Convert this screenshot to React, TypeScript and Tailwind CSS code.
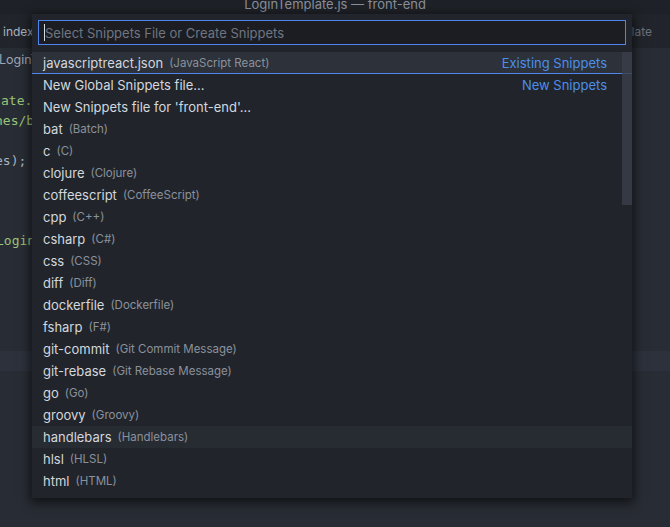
import React from "react";

const rows: { label: string; desc?: string; right?: string }[] = [
  { label: "javascriptreact.json", desc: "(JavaScript React)", right: "Existing Snippets" },
  { label: "New Global Snippets file...", right: "New Snippets" },
  { label: "New Snippets file for 'front-end'..." },
  { label: "bat", desc: "(Batch)" },
  { label: "c", desc: "(C)" },
  { label: "clojure", desc: "(Clojure)" },
  { label: "coffeescript", desc: "(CoffeeScript)" },
  { label: "cpp", desc: "(C++)" },
  { label: "csharp", desc: "(C#)" },
  { label: "css", desc: "(CSS)" },
  { label: "diff", desc: "(Diff)" },
  { label: "dockerfile", desc: "(Dockerfile)" },
  { label: "fsharp", desc: "(F#)" },
  { label: "git-commit", desc: "(Git Commit Message)" },
  { label: "git-rebase", desc: "(Git Rebase Message)" },
  { label: "go", desc: "(Go)" },
  { label: "groovy", desc: "(Groovy)" },
  { label: "handlebars", desc: "(Handlebars)" },
  { label: "hlsl", desc: "(HLSL)" },
  { label: "html", desc: "(HTML)" },
];

const codeLines: { text: string; color: string; shift: string }[] = [
  { text: "", color: "", shift: "" },
  { text: "ate.", color: "text-[#98c379]", shift: "ml-[1px]" },
  { text: "hes/b", color: "text-[#98c379]", shift: "ml-[-5px]" },
  { text: "", color: "", shift: "" },
  { text: "es);", color: "text-[#abb2bf]", shift: "ml-[-5px]" },
  { text: "", color: "", shift: "" },
  { text: "", color: "", shift: "" },
  { text: "", color: "", shift: "" },
  { text: "Login", color: "text-[#98c379]", shift: "ml-[-4px]" },
];

export default function App() {
  return (
    <div
      className="relative w-[670px] h-[527px] overflow-hidden bg-[#282c34]"
      style={{ fontFamily: "Inter, 'Noto Sans', sans-serif" }}
    >
      {/* title bar */}
      <div className="h-[14px] overflow-hidden bg-[#1e2127] flex justify-center">
        <div className="-mt-[3px] leading-[14px] text-[13px] text-[#8a909b]">
          LoginTemplate.js — front-end
        </div>
      </div>
      {/* tab bar */}
      <div className="h-[34px] bg-[#21252b] flex items-center justify-between text-[12px] pt-[2px]">
        <span className="ml-[3px] text-[#abb2bf]">index</span>
        <span className="mr-[18px] text-[#6b717d]">late</span>
      </div>
      {/* breadcrumb */}
      <div className="h-[23px] flex items-center text-[12.5px] text-[#9da5b4] pt-[2px]">
        <span className="ml-[-1px]">LoginT</span>
      </div>
      {/* code */}
      <div
        className="text-[13px]"
        style={{ fontFamily: "'DejaVu Sans Mono', 'Liberation Mono', monospace" }}
      >
        {codeLines.map((l, i) => (
          <div key={i} className="h-[20px] leading-[20px] whitespace-pre">
            <span className={`${l.color} ${l.shift} inline-block`}>{l.text}</span>
          </div>
        ))}
        {Array.from({ length: 5 }).map((_, i) => (
          <div key={"e" + i} className="h-[20px]" />
        ))}
        <div className="h-[20px] bg-[#2c313c]" />
      </div>

      {/* quick pick widget */}
      <div className="absolute left-[32px] top-[14px] w-[600px] h-[484px] bg-[#21252b] shadow-[0_3px_10px_2px_rgba(0,0,0,0.6)] flex flex-col">
        <div className="px-[6px] pt-[6px]">
          <div className="h-[25px] border border-[#4f86ee] bg-[#1b1d22] flex items-center pl-[5px] pt-[2px]">
            <div className="w-[1px] h-[17px] bg-[#d7dae0] -mt-[2px]" />
            <span className="text-[13px] text-[#6f7581]">
              Select Snippets File or Create Snippets
            </span>
          </div>
        </div>
        <div className="mt-[7px] relative">
          {rows.map((r, i) => {
            const bg =
              i === 0 ? "bg-[#2c313a] border-b border-[#4f86ee]" : i === 17 ? "bg-[#272b32]" : "";
            return (
              <div
                key={r.label}
                className={`h-[22px] flex items-center pl-[11px] pr-[25px] pt-[2px] ${bg}`}
              >
                <span className="text-[13px] text-[#d3d7de] whitespace-pre">{r.label}</span>
                {r.desc && (
                  <span className="ml-[6px] text-[11.5px] text-[#8b919c] whitespace-pre">
                    {r.desc}
                  </span>
                )}
                <span className="flex-1" />
                {r.right && (
                  <span className="text-[13px] text-[#4d8ee8] whitespace-pre">{r.right}</span>
                )}
              </div>
            );
          })}
          {/* scrollbar */}
          <div className="absolute right-0 top-0 w-[10px] h-[153px] bg-[#3a3f4a]/80" />
        </div>
      </div>
    </div>
  );
}
